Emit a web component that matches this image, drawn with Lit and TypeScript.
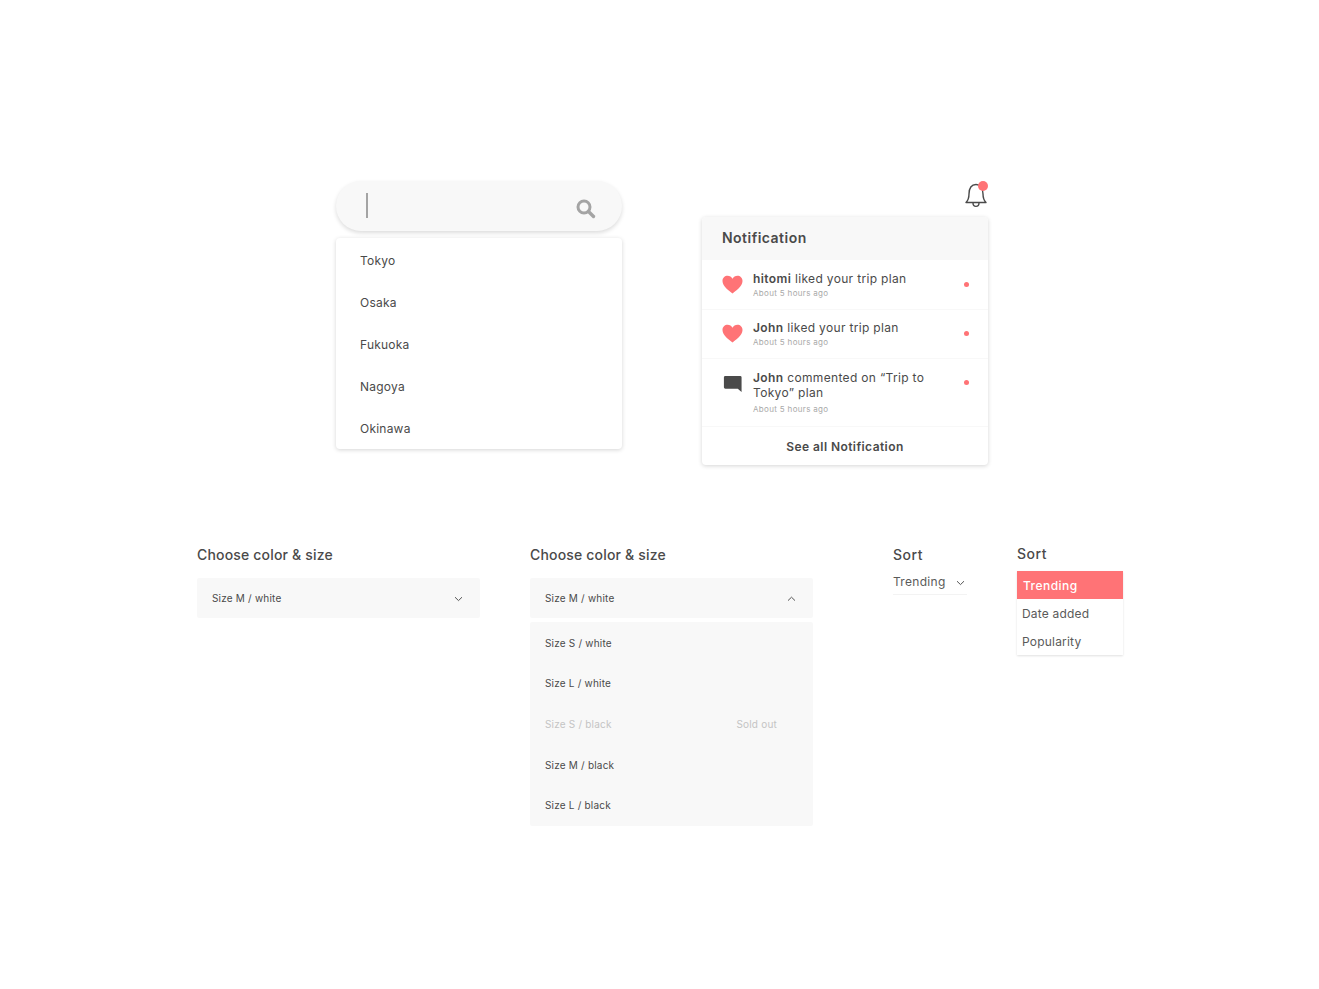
import { LitElement, html, css, svg } from "lit";
import { customElement } from "lit/decorators.js";

const heart = html`<svg class="ic" width="21" height="19" viewBox="0 0 22 20" preserveAspectRatio="none"><path fill="#ff7376" d="M11 19.5 C8 16.8 .5 12 .5 6.2 C.5 2.9 3 .8 5.8 .8 C8 .8 10 2 11 4 C12 2 14 .8 16.2 .8 C19 .8 21.5 2.9 21.5 6.2 C21.5 12 14 16.8 11 19.5Z"/></svg>`;
const chevDown = svg`<path d="M1 1.2 L4.5 4.6 L8 1.2" fill="none" stroke="#555" stroke-width="1"/>`;
const chevUp = svg`<path d="M1 4.6 L4.5 1.2 L8 4.6" fill="none" stroke="#555" stroke-width="1"/>`;

@customElement("app-root")
export class AppRoot extends LitElement {
  static styles = css`
    :host { display: block; height: 989px; background: #fff; color: #4a4a4a; font-family: Inter, "Liberation Sans", sans-serif; overflow: hidden; }
    .top { display: flex; gap: 80px; padding: 181px 0 0 336px; }
    .col { width: 286px; display: flex; flex-direction: column; }
    .search { height: 50px; border-radius: 25px; background: #f8f8f8; box-shadow: 0 2px 4px rgba(0,0,0,.14); display: flex; align-items: center; justify-content: space-between; padding: 0 26px 0 30px; }
    .caret { width: 2px; height: 25px; background: #a4a4a4; margin-top: -1px; }
    .search svg { margin-top: 6px; }
    .list { margin-top: 7px; height: 211px; border-radius: 4px; background: #fff; box-shadow: 0 1px 4px rgba(0,0,0,.17); display: flex; flex-direction: column; padding-top: 2px; box-sizing: border-box; }
    .list div { height: 42px; line-height: 42px; padding-left: 24px; font-size: 12px; letter-spacing: .22px; }
    .bell { align-self: flex-end; height: 36px; position: relative; width: 26px; }
    .bell svg { display: block; margin: 1px 0 0 2px; }
    .badge { position: absolute; top: 0; right: 0; width: 10px; height: 10px; border-radius: 50%; background: #ff7376; }
    .notif { border-radius: 4px; background: #fff; box-shadow: 0 1px 4px rgba(0,0,0,.17); overflow: hidden; }
    .nhead { height: 43px; background: #f8f8f8; line-height: 41px; padding-left: 20px; font-size: 14px; font-weight: 600; letter-spacing: .48px; }
    .item { display: flex; border-bottom: 1px solid #f8f8f8; padding: 11px 0 0 20px; box-sizing: border-box; position: relative; }
    .i1 { height: 50px; } .i2 { height: 49px; padding-top: 10px; } .i3 { height: 68px; }
    .ic { flex: none; margin-top: 4px; }
    .txt { margin-left: 10px; width: 190px; font-size: 12px; line-height: 15px; letter-spacing: .33px; }
    .txt b { font-weight: 600; letter-spacing: .4px; }
    .ago { display: block; font-size: 8px; line-height: 13px; margin-top: 1px; color: #a9a9a9; letter-spacing: .33px; }
    .i3 .ago { margin-top: 3px; }
    .dot { position: absolute; right: 19px; top: 21px; width: 5px; height: 5px; border-radius: 50%; background: #ff7376; }
    .i1 .dot { top: 22px; }
    .all { height: 38px; line-height: 40px; text-align: center; font-size: 12px; font-weight: 600; letter-spacing: .42px; }
    .bottom { display: flex; padding: 81px 0 0 197px; align-items: flex-start; }
    .sel { width: 283px; }
    .sel + .sel { margin-left: 50px; }
    h3 { margin: 0; font-size: 14px; font-weight: 500; line-height: 17px; letter-spacing: .55px; }
    .sel h3 { letter-spacing: .18px; }
    .box { margin-top: 15px; height: 40px; border-radius: 2px; background: #f8f8f8; display: flex; align-items: center; justify-content: space-between; padding: 0 17px 0 15px; font-size: 10px; letter-spacing: .2px; }
    .box svg { margin-top: 1px; }
    .drop { margin-top: 4px; height: 204px; background: #f8f8f8; border-radius: 2px; display: flex; flex-direction: column; padding-top: .7px; box-sizing: border-box; font-size: 10px; letter-spacing: .2px; }
    .drop div { height: 40.8px; line-height: 40px; padding: 0 36px 0 15px; display: flex; justify-content: space-between; }
    .drop .off { color: #c4c4c4; }
    .sort { width: 74px; margin-left: 80px; }
    .sortval { margin-top: 11px; height: 20px; display: flex; justify-content: space-between; font-size: 12px; line-height: 15px; letter-spacing: .3px; border-bottom: 1px solid #f3f3f3; color: #5a5a5a; padding-right: 2px; }
    .sortval svg { margin-top: 6px; }
    .open { width: 106px; margin-left: 50px; margin-top: -1px; }
    .menu { margin-top: 9px; box-shadow: 0 1px 2px rgba(0,0,0,.12); font-size: 12px; letter-spacing: .2px; color: #5a5a5a; }
    .menu div { height: 28px; line-height: 30px; padding-left: 5px; }
    .menu .on { background: #ff7376; color: #fff; padding-left: 6px; font-weight: 500; letter-spacing: .45px; }
  `;

  private row(cls: string, icon: unknown, who: string, rest: string) {
    return html`<div class="item ${cls}">${icon}<div class="txt"><b>${who}</b> ${rest}<span class="ago">About 5 hours ago</span></div><span class="dot"></span></div>`;
  }

  render() {
    const bubble = html`<svg class="ic" width="21" height="20" viewBox="0 0 22 20"><path fill="#4a4a4a" d="M3.5 1.5 H19 a1.5 1.5 0 0 1 1.5 1.5 V18.5 L16.5 15 H3.5 a1.5 1.5 0 0 1 -1.5 -1.5 V3 a1.5 1.5 0 0 1 1.5 -1.5Z"/></svg>`;
    return html`
      <div class="top">
        <div class="col">
          <div class="search">
            <span class="caret"></span>
            <svg width="20" height="20" viewBox="0 0 20 20"><circle cx="8" cy="8" r="6" fill="none" stroke="#a4a4a4" stroke-width="3"/><path d="M12.5 12.5 L17.5 17.5" stroke="#a4a4a4" stroke-width="3.4" stroke-linecap="round"/></svg>
          </div>
          <div class="list"><div>Tokyo</div><div>Osaka</div><div>Fukuoka</div><div>Nagoya</div><div>Okinawa</div></div>
        </div>
        <div class="col">
          <div class="bell">
            <svg width="24" height="27" viewBox="0 0 24 27"><path fill="none" stroke="#4a4a4a" stroke-width="1.4" stroke-linejoin="round" d="M2 20.5 C4.5 18 5 16 5 12 C5 6 7.5 2.5 12 2.5 C16.5 2.5 19 6 19 12 C19 16 19.5 18 22 20.5 Z M9 21 C9 25.5 15 25.5 15 21"/></svg>
            <span class="badge"></span>
          </div>
          <div class="notif">
            <div class="nhead">Notification</div>
            ${this.row("i1", heart, "hitomi", "liked your trip plan")}
            ${this.row("i2", heart, "John", "liked your trip plan")}
            ${this.row("i3", bubble, "John", "commented on \u201CTrip to Tokyo\u201D plan")}
            <div class="all">See all Notification</div>
          </div>
        </div>
      </div>
      <div class="bottom">
        <div class="sel">
          <h3>Choose color &amp; size</h3>
          <div class="box"><span>Size M / white</span><svg width="9" height="6" viewBox="0 0 9 6">${chevDown}</svg></div>
        </div>
        <div class="sel">
          <h3>Choose color &amp; size</h3>
          <div class="box"><span>Size M / white</span><svg width="9" height="6" viewBox="0 0 9 6">${chevUp}</svg></div>
          <div class="drop">
            <div>Size S / white</div>
            <div>Size L / white</div>
            <div class="off"><span>Size S / black</span><span>Sold out</span></div>
            <div>Size M / black</div>
            <div>Size L / black</div>
          </div>
        </div>
        <div class="sort">
          <h3>Sort</h3>
          <div class="sortval"><span>Trending</span><svg width="9" height="6" viewBox="0 0 9 6">${chevDown}</svg></div>
        </div>
        <div class="open">
          <h3>Sort</h3>
          <div class="menu"><div class="on">Trending</div><div>Date added</div><div>Popularity</div></div>
        </div>
      </div>
    `;
  }
}
